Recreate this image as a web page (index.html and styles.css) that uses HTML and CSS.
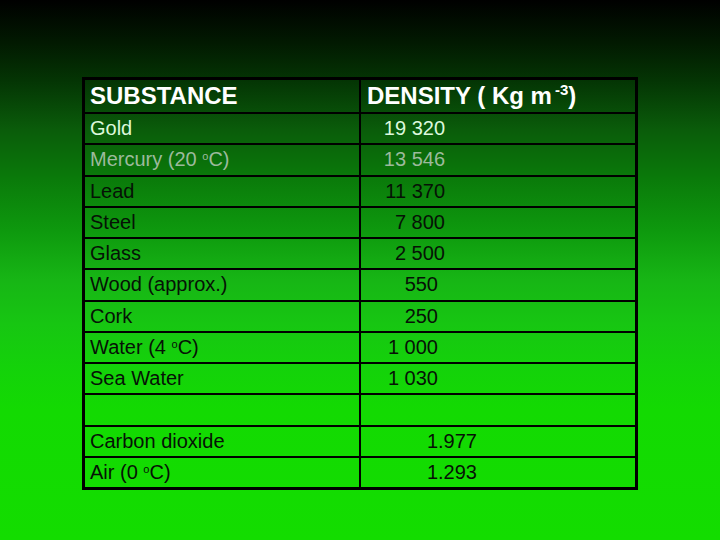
FILE: index.html
```html
<!DOCTYPE html>
<html>
<head>
<meta charset="utf-8">
<link rel="stylesheet" href="styles.css">
</head>
<body>
<div class="slide">
  <table class="density">
    <tr class="head">
      <td class="c1">SUBSTANCE</td>
      <td class="c2 hd">DENSITY ( Kg m<sup class="exp">-3</sup>)</td>
    </tr>
    <tr class="light">
      <td class="c1">Gold</td>
      <td class="c2"><span class="v va">19 320</span></td>
    </tr>
    <tr class="grey">
      <td class="c1">Mercury (20 <sup class="deg">o</sup>C)</td>
      <td class="c2"><span class="v va">13 546</span></td>
    </tr>
    <tr>
      <td class="c1">Lead</td>
      <td class="c2"><span class="v va">11 370</span></td>
    </tr>
    <tr>
      <td class="c1">Steel</td>
      <td class="c2"><span class="v va">7 800</span></td>
    </tr>
    <tr>
      <td class="c1">Glass</td>
      <td class="c2"><span class="v va">2 500</span></td>
    </tr>
    <tr>
      <td class="c1">Wood (approx.)</td>
      <td class="c2"><span class="v vb">550</span></td>
    </tr>
    <tr>
      <td class="c1">Cork</td>
      <td class="c2"><span class="v vb">250</span></td>
    </tr>
    <tr>
      <td class="c1">Water (4 <sup class="deg">o</sup>C)</td>
      <td class="c2"><span class="v vb">1 000</span></td>
    </tr>
    <tr>
      <td class="c1">Sea Water</td>
      <td class="c2"><span class="v vb">1 030</span></td>
    </tr>
    <tr>
      <td class="c1">&nbsp;</td>
      <td class="c2">&nbsp;</td>
    </tr>
    <tr>
      <td class="c1">Carbon dioxide</td>
      <td class="c2"><span class="v vc">1.977</span></td>
    </tr>
    <tr class="last">
      <td class="c1">Air (0 <sup class="deg">o</sup>C)</td>
      <td class="c2"><span class="v vc">1.293</span></td>
    </tr>
  </table>
</div>
</body>
</html>
```

FILE: styles.css
```css
html, body {
  margin: 0;
  padding: 0;
}
body {
  width: 720px;
  height: 540px;
  overflow: hidden;
}
.slide {
  width: 720px;
  height: 540px;
  box-sizing: border-box;
  padding: 77px 0 0 82px;
  background: linear-gradient(to bottom,
    #000000 0%,
    #021a01 8%,
    #043504 15%,
    #0a5c0a 24%,
    #0a7a0a 33%,
    #0e9a0e 43%,
    #17b615 52%,
    #17c612 60%,
    #14d20a 68%,
    #13da02 76%,
    #13dd00 100%);
  font-family: "Liberation Sans", Arial, sans-serif;
}
.density {
  border-collapse: separate;
  border-spacing: 0;
  border: 3px solid #000;
  width: 556px;
  table-layout: fixed;
  color: #061206;
}
.density td {
  padding: 0;
  font-size: 20px;
  line-height: 29.25px;
  border-bottom: 2px solid #000;
  white-space: nowrap;
  vertical-align: middle;
}
.density .c1 {
  width: 269px;
  padding-left: 5px;
  border-right: 2px solid #000;
}
.density .c2 {
  padding-left: 0;
}
.density .head td {
  font-size: 24px;
  font-weight: bold;
  line-height: 32px;
  color: #ffffff;
}
.density .c2.hd {
  padding-left: 6px;
}
.density .last td {
  border-bottom: none;
}
.light td {
  color: #dcf8dc;
}
.grey td {
  color: #9cba9c;
}
.v {
  display: inline-block;
  text-align: right;
}
.va { width: 84px; }
.vb { width: 77px; }
.vc { width: 116px; }
.deg {
  font-size: 11px;
  line-height: 0;
  vertical-align: 6px;
}
.exp {
  font-size: 15px;
  font-weight: bold;
  line-height: 0;
  vertical-align: 9px;
  margin-left: 3px;
}
```
